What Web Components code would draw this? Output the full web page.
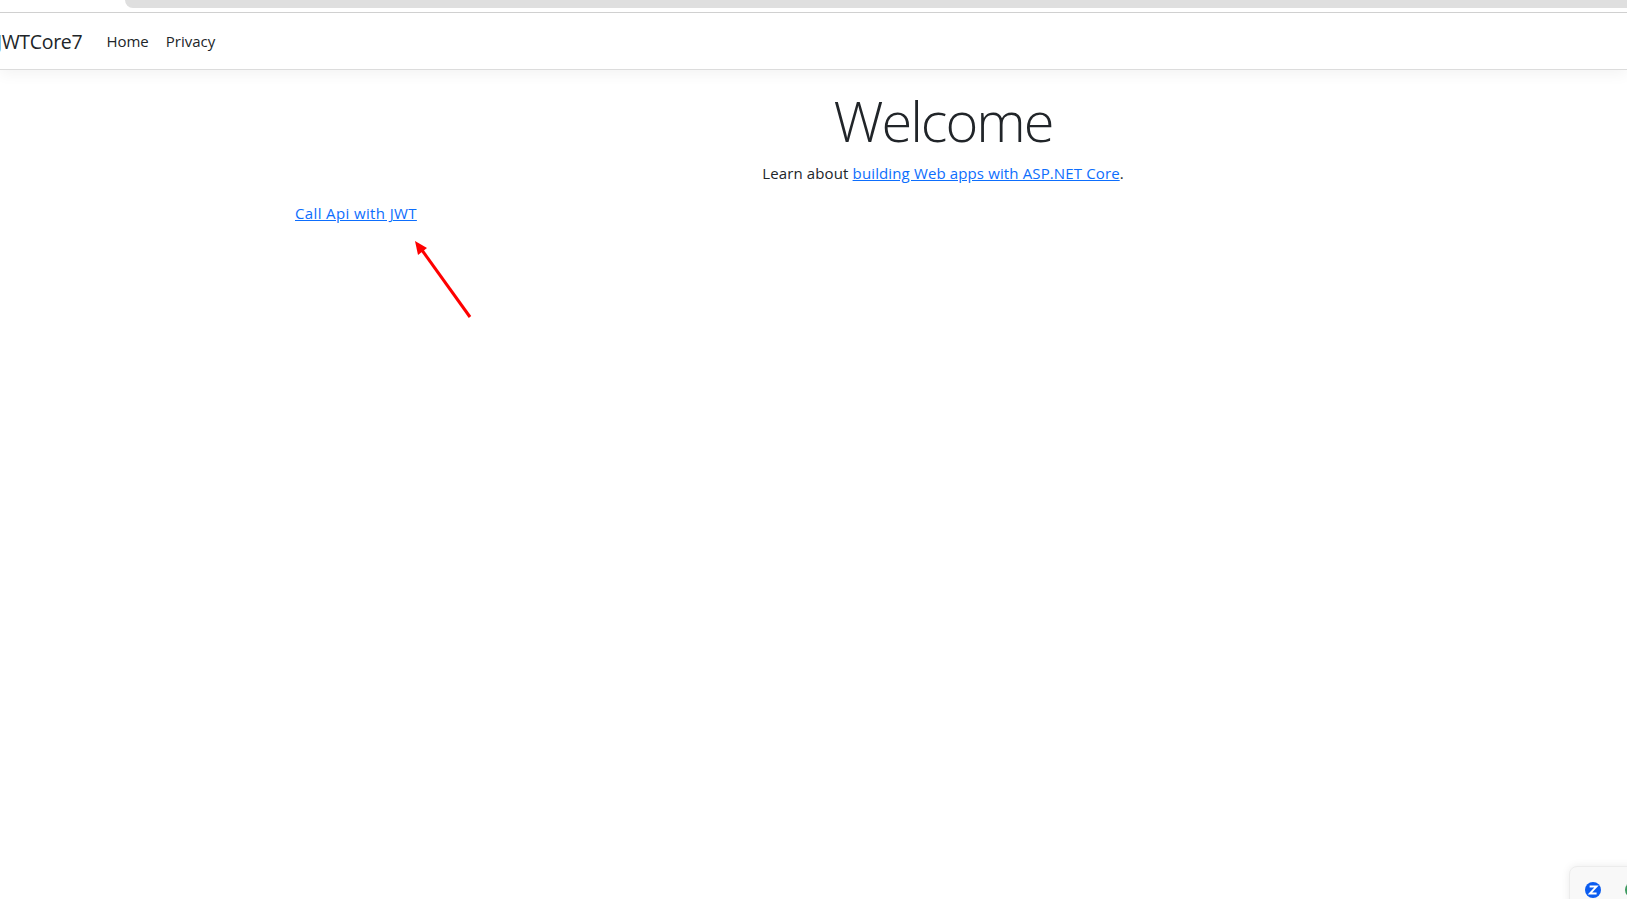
<!DOCTYPE html>
<html>
<head>
<meta charset="utf-8">
<title>JWTCore7</title>
<style>
    html, body { margin: 0; height: 100%; overflow: hidden; background: #fff; }
    body { font-family: "Open Sans", "Noto Sans", sans-serif; color: #212529; }
    #page { display: flex; flex-direction: column; height: 899px; }
</style>
</head>
<body>
<div id="page">
    <browser-strip></browser-strip>
    <site-nav brand="JWTCore7">
        <a href="#">Home</a>
        <a href="#">Privacy</a>
    </site-nav>
    <home-main></home-main>
</div>
<tray-widget></tray-widget>

<script>
class BrowserStrip extends HTMLElement {
    constructor() {
        super();
        this.attachShadow({ mode: 'open' });
    }

    connectedCallback() {
        this.shadowRoot.innerHTML = `
            <style>
                :host { display: block; height: 13px; flex: none; box-sizing: border-box; border-bottom: 1px solid #d0d0d0; padding-left: 125px; padding-bottom: 4px; }
                .bar { height: 8px; background: #dfdfdf; border-bottom-left-radius: 8px; }
            </style>
            <div class="bar"></div>
        `;
    }
}

class SiteNav extends HTMLElement {
    constructor() {
        super();
        this.attachShadow({ mode: 'open' });
    }

    connectedCallback() {
        const brand = this.getAttribute('brand');
        this.shadowRoot.innerHTML = `
            <style>
                :host { display: flex; flex: none; align-items: center; height: 57px; box-sizing: border-box; border-bottom: 1px solid #dcdcdc; box-shadow: 0 4px 14px rgba(0,0,0,.05); overflow: hidden; clip-path: inset(0 0 -20px 0); }
                .brand { font-size: 19.5px; letter-spacing: -.3px; margin-left: -3.3px; margin-right: 24px; white-space: nowrap; }
                .links { display: flex; gap: 17px; font-size: 15px; }
                ::slotted(a) { color: #212529; text-decoration: none; }
            </style>
            <span class="brand">${brand}</span>
            <div class="links"><slot></slot></div>
        `;
    }
}

class HomeMain extends HTMLElement {
    constructor() {
        super();
        this.attachShadow({ mode: 'open' });
    }

    connectedCallback() {
        this.shadowRoot.innerHTML = `
            <style>
                :host { display: block; flex: 1; position: relative; }
                .hero { display: flex; flex-direction: column; align-items: center; padding-left: 259px; }
                h1 { font-size: 56px; font-weight: 300; line-height: 67px; letter-spacing: -2px; margin: 17px 0 0; }
                p { font-size: 15px; line-height: 24px; letter-spacing: .13px; margin: 7px 0 0; }
                a { color: #0d6efd; }
                .call { display: block; font-size: 15px; line-height: 24px; letter-spacing: .37px; margin: 16px 0 0 295px; width: max-content; }
                svg { position: absolute; left: 405px; top: 165px; }
            </style>
            <div class="hero">
                <h1>Welcome</h1>
                <p>Learn about <a href="#">building Web apps with ASP.NET Core</a>.</p>
            </div>
            <a class="call" href="#">Call Api with JWT</a>
            <svg width="75" height="90" viewBox="0 0 75 90">
                <line x1="65" y1="82" x2="14" y2="11" stroke="#fe0000" stroke-width="3"/>
                <polygon points="10,6 22,13 13,20" fill="#fe0000"/>
            </svg>
        `;
    }
}

class TrayWidget extends HTMLElement {
    constructor() {
        super();
        this.attachShadow({ mode: 'open' });
    }

    connectedCallback() {
        this.shadowRoot.innerHTML = `
            <style>
                :host { position: fixed; left: 1569px; top: 866px; width: 90px; height: 60px; background: #f8f8f8; border: 1px solid #ececec; border-radius: 8px 0 0 0; box-shadow: 0 0 8px rgba(0,0,0,.08); display: flex; gap: 24px; padding: 15px 0 0 15px; box-sizing: border-box; }
                .other { width: 16px; height: 16px; border-radius: 50%; background: conic-gradient(#d9483b 0 25%, #3c9a5f 25% 100%); flex: none; }
                svg { flex: none; }
            </style>
            <svg width="16" height="16" viewBox="0 0 16 16">
                <circle cx="8" cy="8" r="8" fill="#0b5cf0"/>
                <path d="M4.6 4.6H11.4L5 11.4H11.6" fill="none" stroke="#fff" stroke-width="2"/>
            </svg>
            <span class="other"></span>
        `;
    }
}

customElements.define('browser-strip', BrowserStrip);
customElements.define('site-nav', SiteNav);
customElements.define('home-main', HomeMain);
customElements.define('tray-widget', TrayWidget);
</script>
</body>
</html>
